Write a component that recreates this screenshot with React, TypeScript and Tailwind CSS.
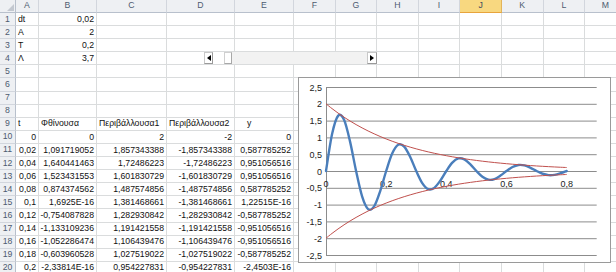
import React from "react";

type Cell = { t: string; a?: "l" | "r" | "c" | "y" };

const COLS = ["A", "B", "C", "D", "E", "F", "G", "H", "I", "J", "K", "L", "M"];

const L = (t: string): Cell => ({ t, a: "l" });
const R = (t: string): Cell => ({ t, a: "r" });

const rows: Cell[][] = [
  [L("dt"), R("0,02")],
  [L("A"), R("2")],
  [L("T"), R("0,2")],
  [L("Λ"), R("3,7")],
  [],
  [],
  [],
  [],
  [L("t"), L("Φθίνουσα"), L("Περιβάλλουσα1"), L("Περιβάλλουσα2"), { t: "y", a: "y" }],
  [R("0"), R("0"), R("2"), R("-2"), R("0")],
  [R("0,02"), R("1,091719052"), R("1,857343388"), R("-1,857343388"), R("0,587785252")],
  [R("0,04"), R("1,640441463"), R("1,72486223"), R("-1,72486223"), R("0,951056516")],
  [R("0,06"), R("1,523431553"), R("1,601830729"), R("-1,601830729"), R("0,951056516")],
  [R("0,08"), R("0,874374562"), R("1,487574856"), R("-1,487574856"), R("0,587785252")],
  [R("0,1"), R("1,6925E-16"), R("1,381468661"), R("-1,381468661"), R("1,22515E-16")],
  [R("0,12"), R("-0,754087828"), R("1,282930842"), R("-1,282930842"), R("-0,587785252")],
  [R("0,14"), R("-1,133109236"), R("1,191421558"), R("-1,191421558"), R("-0,951056516")],
  [R("0,16"), R("-1,052286474"), R("1,106439476"), R("-1,106439476"), R("-0,951056516")],
  [R("0,18"), R("-0,603960528"), R("1,027519022"), R("-1,027519022"), R("-0,587785252")],
  [R("0,2"), R("-2,33814E-16"), R("0,954227831"), R("-0,954227831"), R("-2,4503E-16")],
];

function smooth(pts: [number, number][]) {
  let d = `M${pts[0][0].toFixed(2)},${pts[0][1].toFixed(2)}`;
  for (let i = 0; i < pts.length - 1; i++) {
    const p0 = pts[i - 1] || pts[i];
    const p1 = pts[i];
    const p2 = pts[i + 1];
    const p3 = pts[i + 2] || p2;
    const c1x = p1[0] + (p2[0] - p0[0]) / 6;
    const c1y = p1[1] + (p2[1] - p0[1]) / 6;
    const c2x = p2[0] - (p3[0] - p1[0]) / 6;
    const c2y = p2[1] - (p3[1] - p1[1]) / 6;
    d += ` C${c1x.toFixed(2)},${c1y.toFixed(2)} ${c2x.toFixed(2)},${c2y.toFixed(2)} ${p2[0].toFixed(2)},${p2[1].toFixed(2)}`;
  }
  return d;
}

function Chart() {
  const X0 = 27;
  const XS = 300.8;
  const Y0 = 93;
  const YS = 33.6;
  const ts = Array.from({ length: 41 }, (_, i) => i * 0.02);
  const px = (t: number) => X0 + t * XS;
  const py = (v: number) => Y0 - v * YS;
  const blue = ts.map((t) => [px(t), py(2 * Math.exp(-3.7 * t) * Math.sin(10 * Math.PI * t))] as [number, number]);
  const up = ts.map((t) => [px(t), py(2 * Math.exp(-3.7 * t))] as [number, number]);
  const dn = ts.map((t) => [px(t), py(-2 * Math.exp(-3.7 * t))] as [number, number]);
  const ys = [2.5, 2, 1.5, 1, 0.5, 0, -0.5, -1, -1.5, -2, -2.5];
  const fmt = (v: number) => String(v).replace(".", ",");
  const xl = [0, 0.2, 0.4, 0.6, 0.8];
  return (
    <svg width="311" height="184" viewBox="0 0 311 184" className="block">
      {ys.map((v) => (
        <line key={v} x1={X0} x2={297.7} y1={py(v) + 0.5} y2={py(v) + 0.5} stroke="#8c8c8c" strokeWidth="1" />
      ))}
      <line x1={X0 + 0.5} x2={X0 + 0.5} y1={py(2.5)} y2={py(-2.5) + 1} stroke="#8c8c8c" strokeWidth="1" />
      {ys.map((v) => (
        <text key={v} x={23} y={py(v) + 3.5} fontSize="9" textAnchor="end" fill="#222" fontFamily="'Liberation Sans', Arial, sans-serif">
          {fmt(v)}
        </text>
      ))}
      {xl.map((v) => (
        <text key={v} x={px(v)} y={109} fontSize="9" textAnchor="middle" fill="#222" fontFamily="'Liberation Sans', Arial, sans-serif">
          {fmt(v)}
        </text>
      ))}
      <path d={smooth(blue)} fill="none" stroke="#4a7ebb" strokeWidth="2.4" strokeLinejoin="round" strokeLinecap="round" />
      <path d={smooth(up)} fill="none" stroke="#c0504d" strokeWidth="1" />
      <path d={smooth(dn)} fill="none" stroke="#c0504d" strokeWidth="1" />
    </svg>
  );
}

function ScrollBar() {
  return (
    <div className="absolute left-[204px] top-[52px] flex h-[12px] w-[173px] items-stretch">
      <div className="flex w-[9px] items-center justify-center border border-[#c8c8c8] border-r-[#9a9a9a] border-b-[#9a9a9a] bg-white">
        <svg width="4" height="6" viewBox="0 0 4 6">
          <path d="M4 0 L0 3 L4 6 Z" fill="#000" />
        </svg>
      </div>
      <div className="w-[11px] bg-white" />
      <div className="w-[8px] border border-[#d0d0d0] border-r-[#a8a8a8] border-b-[#a8a8a8] bg-white" />
      <div className="flex-1 bg-[#f2f2f2]" />
      <div className="flex w-[10px] items-center justify-center border border-[#c8c8c8] border-r-[#9a9a9a] border-b-[#9a9a9a] bg-white">
        <svg width="4" height="6" viewBox="0 0 4 6">
          <path d="M0 0 L4 3 L0 6 Z" fill="#000" />
        </svg>
      </div>
    </div>
  );
}

export default function App() {
  return (
    <div
      className="relative h-[272px] w-[616px] overflow-hidden bg-white text-[8.7px] text-[#111]"
      style={{ fontFamily: "'Liberation Sans', Arial, sans-serif" }}
    >
      <div className="grid grid-cols-[16px_23px_58px_70px_68px_59px_repeat(8,41.6px)] grid-rows-[13px_repeat(20,13.1px)]">
        <div className="relative border-r border-b border-[#b8c0cc] bg-[#eef0f3]">
          <svg className="absolute right-[1px] bottom-[1px]" width="7" height="7" viewBox="0 0 7 7">
            <path d="M7 0 L7 7 L0 7 Z" fill="#c3c8d0" />
          </svg>
        </div>
        {COLS.map((c) =>
          c === "J" ? (
            <div
              key={c}
              className="flex items-center justify-center border-r border-b border-r-[#e3b45a] border-b-[#e8a43c] bg-[#f8d880] text-[#3d4a5e]"
            >
              {c}
            </div>
          ) : (
            <div
              key={c}
              className="flex items-center justify-center border-r border-b border-r-[#d2d6dd] border-b-[#b8c0cc] bg-[#eef0f3] text-[#4d5b70]"
            >
              {c}
            </div>
          )
        )}
        {rows.map((r, ri) => (
          <React.Fragment key={ri}>
            <div className="flex items-center justify-center border-r border-b border-r-[#b8c0cc] border-b-[#d2d6dd] bg-[#eef0f3] text-[#4d5b70]">
              {ri + 1}
            </div>
            {COLS.map((c, ci) => {
              const cell = r[ci];
              let cls = "flex items-center overflow-visible whitespace-nowrap border-r border-b border-[#dadcdd] leading-none ";
              if (cell) {
                if (cell.a === "l") cls += "justify-start pl-[2px]";
                else if (cell.a === "r") cls += "justify-end pr-[2px]";
                else if (cell.a === "y") cls += "justify-start pl-[12px]";
              }
              return (
                <div key={c} className={cls}>
                  {cell ? cell.t : null}
                </div>
              );
            })}
          </React.Fragment>
        ))}
      </div>
      <ScrollBar />
      <div className="absolute left-[298px] top-[77px] h-[186px] w-[313px] border border-[#9a9a9a] bg-white">
        <Chart />
      </div>
    </div>
  );
}
